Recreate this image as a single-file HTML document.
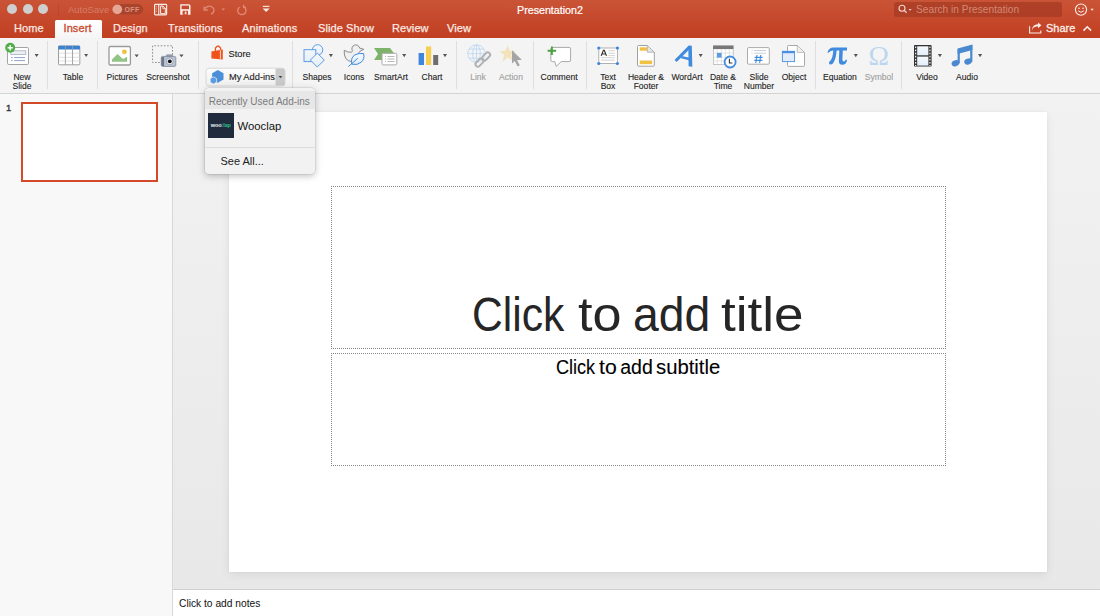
<!DOCTYPE html>
<html><head><meta charset="utf-8">
<style>
*{margin:0;padding:0;box-sizing:border-box}
html,body{width:1100px;height:616px;overflow:hidden;background:#fff;font-family:"Liberation Sans",sans-serif}
.a{position:absolute}
#top{left:0;top:0;width:1100px;height:38px;background:linear-gradient(#CA5437,#C13E21)}
.tl{width:10px;height:10px;border-radius:50%;background:#CFCFCF;top:3.5px}
.tab{top:22px;font-size:11px;color:#FBE9E4;white-space:nowrap;letter-spacing:0.1px;-webkit-text-stroke:0.25px #FBE9E4}
#instab{left:55px;top:20px;width:46.5px;height:18px;background:linear-gradient(#FFFFFF,#F6F6F6);border-radius:1.5px 1.5px 0 0}
#ribbon{left:0;top:38px;width:1100px;height:56px;background:#F4F4F4;border-bottom:1px solid #D4D4D4}
.sep{top:41px;width:1px;height:48px;background:#E0E0E0}
.lbl{font-size:9.3px;color:#1E1E1E;white-space:nowrap;line-height:9.2px;text-align:center;transform:scaleX(0.92);-webkit-text-stroke:0.12px #1E1E1E}
.lbl.dis{-webkit-text-stroke:0.12px #A0A0A0}
.dis{color:#A0A0A0}
.arr{width:0;height:0;border-left:3px solid transparent;border-right:3px solid transparent;border-top:4px solid #555}
#left{left:0;top:94px;width:173px;height:522px;background:#F8F8F8;border-right:1px solid #D8D8D8}
#main{left:173px;top:94px;width:927px;height:495px;background:linear-gradient(#F2F2F2,#EDEDED 50%,#E8E8E8)}
#notes{left:173px;top:589px;width:927px;height:27px;background:#FFF;border-top:1px solid #D0D0D0}
#slide{left:229px;top:112px;width:818px;height:460px;background:#FFF;box-shadow:0 0 2px rgba(0,0,0,0.06),0 3px 10px rgba(0,0,0,0.07)}
.ttl{top:287px;font-size:48px;color:#262626;white-space:nowrap;transform-origin:0 0}
.sttl{top:355.5px;font-size:19.5px;color:#000;white-space:nowrap;transform-origin:0 0;-webkit-text-stroke:0.1px #000}
.ph{border:1px dotted #858585}
</style></head><body>
<div id="top" class="a"></div>
<div class="a tl" style="left:7px"></div>
<div class="a tl" style="left:22.5px"></div>
<div class="a tl" style="left:38px"></div>
<div class="a" style="left:58px;top:3px;width:1px;height:13px;background:rgba(0,0,0,0.08)"></div>
<div class="a" style="left:68px;top:4px;font-size:9.5px;color:rgba(255,255,255,0.28)">AutoSave</div>
<div class="a" style="left:517px;top:4px;font-size:10.7px;color:#FFF;-webkit-text-stroke:0.2px #FFF">Presentation2</div>


<svg class="a" style="left:0;top:0" width="1100" height="38" viewBox="0 0 1100 38">
<rect x="112.3" y="4.1" width="31" height="10.5" rx="5.25" fill="#A9442C"/>
<circle cx="117.3" cy="9.35" r="4.9" fill="#E7A594"/>
<text x="124.5" y="12.2" font-family="Liberation Sans" font-weight="bold" font-size="7" fill="#DC927F" letter-spacing="0.4">OFF</text>
<!-- sidebar icon -->
<rect x="154.6" y="4.3" width="12" height="10.6" rx="0.8" fill="none" stroke="#FBEDE8" stroke-width="1.2"/>
<rect x="158.2" y="4.3" width="1.1" height="10.6" fill="#FBEDE8"/>
<path d="M156.3 6.3V7.1M156.3 8.6V9.4M156.3 10.9V11.7" stroke="#FBEDE8" stroke-width="0.9"/>
<path d="M160.6 6V13.6H165.3V8.6L162.9 6Z" fill="none" stroke="#FBEDE8" stroke-width="1"/>
<path d="M162.9 6V8.6H165.3" fill="none" stroke="#FBEDE8" stroke-width="0.8"/>
<!-- save icon -->
<path d="M180.2 4.2H189.2L190.5 5.5V14.8H180.2Z" fill="#FBEDE8"/>
<rect x="181.6" y="5.6" width="7.4" height="3.6" fill="#C84A2E"/>
<rect x="182.6" y="10.8" width="5.4" height="4" fill="#C84A2E"/>
<rect x="184.8" y="11.6" width="1.6" height="2.4" fill="#FBEDE8"/>
<!-- undo -->
<g fill="none" stroke="#E49A88" stroke-width="1.3" opacity="0.8">
<path d="M205 8.5Q207.5 5.8 210.5 6.3Q214 7.2 214 10.2Q214 13.2 211 14"/>
<path d="M204.2 6.4V10H207.8"/>
<path d="M239.5 7.1Q237.2 9 237.8 11.6Q238.7 14.6 241.8 14.6Q245.5 14.4 246 10.8Q246 7.6 243.2 6.6"/>
<path d="M243.6 4.8V7.4H246"/>
</g>
<path d="M221.5 8.6H225L223.25 10.6Z" fill="#E49A88" opacity="0.8"/>
<!-- customize -->
<rect x="262.8" y="5.8" width="6.6" height="1.1" fill="#FBEDE8"/>
<path d="M262.6 8.4H269.6L266.1 12.1Z" fill="#FBEDE8"/>
<!-- search box -->
<rect x="894" y="2" width="168" height="15" rx="2.5" fill="#A53A22" opacity="0.72"/>
<circle cx="902" cy="8.2" r="3" fill="none" stroke="#F5D8D0" stroke-width="1.1"/>
<path d="M904.2 10.4L906.6 12.8" stroke="#F5D8D0" stroke-width="1.3"/>
<path d="M908.6 9H911.6L910.1 10.8Z" fill="#F5D8D0"/>
<!-- smiley -->
<circle cx="1081" cy="9.6" r="5.6" fill="none" stroke="#FBEDE8" stroke-width="1.1"/>
<circle cx="1079" cy="8.2" r="0.8" fill="#FBEDE8"/><circle cx="1083" cy="8.2" r="0.8" fill="#FBEDE8"/>
<path d="M1078.2 10.8Q1081 13.8 1083.8 10.8" fill="none" stroke="#FBEDE8" stroke-width="1"/>
<path d="M1090.4 8.8H1093.8L1092.1 10.8Z" fill="#FBEDE8"/>
<!-- share -->
<path d="M1029.6 26.2V33H1040.8V30.6" fill="none" stroke="#FBEDE8" stroke-width="1.1"/>
<path d="M1031.8 31.2Q1032.5 26.4 1038 26.2V28.2L1041.4 25.2L1038 22.4V24.2Q1032 24.4 1031.8 31.2Z" fill="#FBEDE8"/>
<path d="M1083.5 30.6L1087.3 26.8L1091.1 30.6" fill="none" stroke="#FBEDE8" stroke-width="1.6"/>
</svg>
<div class="a" style="left:916px;top:4px;font-size:10.2px;color:rgba(255,225,215,0.45);white-space:nowrap">Search in Presentation</div>
<div class="a" style="left:1046px;top:22px;font-size:11px;color:#FBEDE8;white-space:nowrap;-webkit-text-stroke:0.3px #FBEDE8">Share</div>
<div id="instab" class="a"></div>
<div class="a tab" style="left:14px">Home</div>
<div class="a tab" style="left:63.5px;color:#C9472A;-webkit-text-stroke:0.3px #C9472A">Insert</div>
<div class="a tab" style="left:113px">Design</div>
<div class="a tab" style="left:168px">Transitions</div>
<div class="a tab" style="left:242px">Animations</div>
<div class="a tab" style="left:318px">Slide Show</div>
<div class="a tab" style="left:392px">Review</div>
<div class="a tab" style="left:447px">View</div>

<div id="ribbon" class="a"></div>

<svg class="a" style="left:0;top:0" width="1100" height="94" viewBox="0 0 1100 94">
<defs>
<linearGradient id="lb" x1="0" y1="0" x2="0" y2="1"><stop offset="0" stop-color="#F6F9FD"/><stop offset="1" stop-color="#E3EDF9"/></linearGradient>
<linearGradient id="btn" x1="0" y1="0" x2="0" y2="1"><stop offset="0" stop-color="#FDFDFD"/><stop offset="1" stop-color="#EFEFEF"/></linearGradient>
</defs>
<!-- New Slide -->
<rect x="7.5" y="47.5" width="21" height="17" rx="1.2" fill="#fff" stroke="#A3A3A3" stroke-width="1"/>
<rect x="10.8" y="50.8" width="15" height="3.6" fill="#F0F0F0" stroke="#A9B6C9" stroke-width="0.9"/>
<rect x="11" y="57" width="1.6" height="1.1" fill="#9AAACC"/><rect x="14.2" y="57" width="10.8" height="1.1" fill="#9AAACC"/>
<rect x="11" y="60" width="1.6" height="1.1" fill="#9AAACC"/><rect x="14.2" y="60" width="10.8" height="1.1" fill="#9AAACC"/>
<circle cx="10.2" cy="47.8" r="5" fill="#52AE4A"/>
<rect x="7.6" y="47.05" width="5.2" height="1.5" fill="#fff"/><rect x="9.45" y="45.2" width="1.5" height="5.2" fill="#fff"/>
<!-- Table -->
<rect x="58.5" y="46" width="21.3" height="18.8" rx="1" fill="#fff" stroke="#9C9C9C" stroke-width="1"/>
<rect x="58.3" y="45.8" width="21.7" height="3.8" rx="0.8" fill="#3D82D0"/>
<path d="M58.8 53.2H79.6M58.8 57.3H79.6M58.8 61H79.6" stroke="#DCDCDC" stroke-width="0.9"/>
<path d="M65.4 46V64.8M72.5 46V64.8" stroke="#9C9C9C" stroke-width="0.9"/>
<!-- Pictures -->
<rect x="109" y="46.5" width="21.4" height="18.5" rx="1.3" fill="#fff" stroke="#9A9A9A" stroke-width="1.3"/>
<path d="M111.9 61.8L111.9 59.5L117.5 54L123 58.9L127.1 56.7L127.1 61.8Z" fill="#92C488"/>
<circle cx="124.4" cy="51.8" r="2.4" fill="#F0C23A"/>
<!-- Screenshot -->
<path d="M163 62.5H152.6V45.8H172.5V56" fill="none" stroke="#8A8A8A" stroke-width="1" stroke-dasharray="1.6 1.6"/>
<rect x="166.3" y="54.8" width="6.2" height="2.5" rx="0.8" fill="#98A1B1" stroke="#7E8696" stroke-width="0.6"/>
<rect x="161.3" y="56.4" width="14.5" height="10" rx="1.3" fill="#BAC3D3" stroke="#7E8696" stroke-width="0.8"/>
<rect x="161.5" y="57" width="2.6" height="9" fill="#6E7788"/>
<circle cx="169.8" cy="61.3" r="3.4" fill="#E8ECF2" stroke="#7E8696" stroke-width="0.6"/>
<circle cx="169.8" cy="61.3" r="1.9" fill="#111"/>
<!-- Store -->
<path d="M215.4 51V48.2Q218 43.8 220.6 48.2V50.5" fill="none" stroke="#F0531A" stroke-width="1.3"/>
<path d="M211.4 51.4L222.8 49.4V59.6L211.4 58.4Z" fill="#F0531A"/>
<path d="M220.4 50.3V58.9" stroke="#fff" stroke-width="0.8"/>
<!-- My Add-ins button -->
<rect x="206" y="68.2" width="79" height="17.8" rx="3" fill="url(#btn)" stroke="#D0D0D0" stroke-width="0.8"/>
<path d="M275.5 68.6H282.3Q284.9 68.6 284.9 71.2V83Q284.9 85.6 282.3 85.6H275.5Z" fill="#C9C9C9"/>
<path d="M278.6 76H282.3L280.45 78.2Z" fill="#444"/>
<path d="M217.8 70L223.5 73.2V79.6L217.8 82.8L212.1 79.6V73.2Z" fill="#4A8FD8"/>
<path d="M213.4 76.8L216.6 78.6V82.2L213.4 84L210.2 82.2V78.6Z" fill="#5C9CE0" stroke="#F4F4F4" stroke-width="0.7"/>
<!-- Shapes -->
<circle cx="317.6" cy="49.9" r="5.2" fill="url(#lb)" stroke="#5B9BE0" stroke-width="1"/>
<rect x="304" y="49.7" width="11.8" height="11.9" fill="url(#lb)" stroke="#5B9BE0" stroke-width="1"/>
<path d="M317.3 53.2L324.3 60.1L317.3 67L310.4 60.1Z" fill="url(#lb)" stroke="#5B9BE0" stroke-width="1"/>
<!-- Icons -->
<path d="M344.2 50.3Q347.5 52.6 351.6 52.2Q352.6 51.7 352.3 50.6A3.9 3.9 0 1 1 359.6 48.1L363.8 49.3L359.9 51.3Q358.8 53 357.2 54.8L352 61.6Q343.6 61.2 344.2 50.3Z" fill="#F0F0F0" stroke="#7E7E7E" stroke-width="0.9" stroke-linejoin="round"/>
<path d="M351.8 64.2Q350.5 57.5 355 54.8Q359 52.8 363.6 53.6Q365 59 361.2 62.2Q357.5 65.5 351.8 64.2Z" fill="url(#lb)" stroke="#3D8AE0" stroke-width="1"/>
<path d="M348.4 66.6L357.8 58.2" stroke="#3D8AE0" stroke-width="1"/>
<!-- SmartArt -->
<path d="M374 48H390L394.5 54L390 60H374L378 54Z" fill="#7DB36A"/>
<rect x="382" y="53.3" width="14.8" height="11.6" rx="1.2" fill="#fff" stroke="#A8A8A8" stroke-width="1"/>
<path d="M385 56.5H386M387.5 56.5H394.5M385 59H386M387.5 59H394.5M385 61.5H386M387.5 61.5H394.5" stroke="#9A9A9A" stroke-width="0.7"/>
<!-- Chart -->
<rect x="418.6" y="53" width="5.4" height="12" fill="#3E86DB"/>
<rect x="426" y="46.5" width="5.2" height="18.5" fill="#F6CF52"/>
<rect x="433.2" y="55" width="5" height="10" fill="#6E6E6E"/>
<!-- Link -->
<g fill="none" stroke="#B9D5F2" stroke-width="0.8">
<circle cx="476.5" cy="53.6" r="8.8"/>
<ellipse cx="476.5" cy="53.6" rx="3.8" ry="8.8"/>
<path d="M467.7 53.6H485.3M469 49H484M469 58.2H484M476.5 44.8V62.4"/>
</g>
<g fill="none" stroke="#B0B0B0" stroke-width="1.9">
<rect x="474.8" y="60.2" width="9.4" height="4.8" rx="2.4" transform="rotate(-45 479.5 62.6)"/>
<rect x="481.4" y="54" width="9.4" height="4.8" rx="2.4" transform="rotate(-45 486.1 56.4)"/>
</g>
<!-- Action -->
<path d="M507.6 45.2L509.7 50.8L515.6 51.1L511 54.9L512.6 60.6L507.6 57.4L502.3 61.8L504.2 55L499.2 51.3L505.4 50.8Z" fill="#F3E3BC"/>
<path d="M512 50.2V63.4L514.7 61.1L517.6 66.4L519.8 65.3L517 60.2L521.8 59.8Z" fill="#A5A5A5"/>
<!-- Comment -->
<path d="M552.4 47.4H569Q570.6 47.4 570.6 49V60Q570.6 61.6 569 61.6H561.2L556.3 66.4L554.7 61.6H552.4Q550.8 61.6 550.8 60V49Q550.8 47.4 552.4 47.4Z" fill="#fff" stroke="#A8A8A8" stroke-width="1"/>
<path d="M547.6 50.7H556.2M551.9 46.4V55" stroke="#4AA33F" stroke-width="1.9"/>
<!-- Text Box -->
<rect x="598.8" y="48" width="18.6" height="15.5" fill="#fff" stroke="#A8A8A8" stroke-width="0.9"/>
<path d="M608.4 50.7H614.9M608.4 53.2H614.9M608.4 55.6H614.9M601 57.7H614.9M601 60.2H614.9" stroke="#C8C8C8" stroke-width="0.8"/>
<path d="M601.2 55.9L603.4 50.3H604.3L606.5 55.9M602.1 54H605.6" fill="none" stroke="#333" stroke-width="1.2"/>
<g fill="#3C86DE"><circle cx="598.8" cy="48" r="1.6"/><circle cx="617.4" cy="48" r="1.6"/><circle cx="598.8" cy="63.5" r="1.6"/><circle cx="617.4" cy="63.5" r="1.6"/></g>
<!-- Header & Footer -->
<path d="M638.5 45.5H647.3L654.3 52.2V65.2Q654.3 66.2 653.3 66.2H638.5Q637.5 66.2 637.5 65.2V46.5Q637.5 45.5 638.5 45.5Z" fill="#fff" stroke="#A0A0A0" stroke-width="1"/>
<path d="M647.3 45.8V52.2H654" fill="#E6E6E6" stroke="#A8A8A8" stroke-width="0.8"/>
<rect x="639.7" y="47.3" width="7.4" height="3.4" fill="#EFC145"/>
<rect x="639.7" y="60.5" width="12.4" height="3.7" fill="#EFC145"/>
<!-- WordArt -->
<path d="M675.6 61L689.6 46.8" fill="none" stroke="#3E8BDF" stroke-width="3.1"/>
<path d="M688.3 45.8Q690 45.2 691.8 45.8L692.3 66.8L688.6 66.2Z" fill="#3E8BDF"/>
<path d="M681.3 57.1L689.3 59" stroke="#3E8BDF" stroke-width="2.5"/>
<!-- Date & Time -->
<rect x="713.4" y="45.8" width="19.8" height="18.6" fill="#fff" stroke="#B8B8B8" stroke-width="0.8"/>
<rect x="713.1" y="45.6" width="20.3" height="3.5" fill="#777"/>
<path d="M717.2 49V64.4M721.4 49V64.4M725.3 49V64.4M729.3 49V64.4M713.4 53H733.2M713.4 57.2H733.2M713.4 61H733.2" stroke="#DADADA" stroke-width="0.7"/>
<rect x="716.9" y="52.9" width="4.7" height="4.7" fill="#5B9BE0"/>
<circle cx="730.1" cy="62" r="5.5" fill="#fff" stroke="#3E8BDF" stroke-width="1.8"/>
<path d="M729.4 58.8V63H732.4" fill="none" stroke="#333" stroke-width="1.1"/>
<!-- Slide Number -->
<rect x="747.5" y="47.6" width="21.8" height="16.6" rx="1.2" fill="#fff" stroke="#AAAAAA" stroke-width="1"/>
<path d="M751.6 50.5H752.6M754.2 50.5H766M751.6 53.2H752.6M754.2 53.2H766" stroke="#B8C2CE" stroke-width="0.8"/>
<path d="M757 55L755.8 62.8M760.8 55L759.6 62.8M754.6 57.4H762.6M754.3 60.4H762.3" stroke="#3E8BDF" stroke-width="1.1"/>
<!-- Object -->
<path d="M788.3 45.5H797.2L804.5 52.4V65.6Q804.5 66.4 803.7 66.4H788.3Q787.5 66.4 787.5 65.6V46.3Q787.5 45.5 788.3 45.5Z" fill="#fff" stroke="#A8A8A8" stroke-width="1"/>
<path d="M797.2 45.8V52.4H804.2" fill="#F0F0F0" stroke="#B0B0B0" stroke-width="0.8"/>
<rect x="782.4" y="51.3" width="12.2" height="10.3" fill="#E3EDF9" stroke="#4A90E0" stroke-width="0.9"/>
<rect x="782.1" y="51" width="12.8" height="2.2" fill="#4A90E0"/>
<!-- Equation -->
<path d="M827.4 52.4Q829 47.6 833.5 47.6H847V50.6H842.8L842.4 59.4Q842.4 61.5 843.8 61.5Q845.1 61.5 845.9 59.5L847.1 59.9Q846.2 64.8 842.2 64.8Q838.7 64.8 838.9 60.4L839.3 50.6H836.6Q836.1 57.6 834.1 61.6Q832.8 64.6 830.8 64.6Q829 64.6 829 63Q829 61.8 830.4 60.8Q832.7 58.4 833.3 50.6Q830.4 50.6 828.5 52.8Z" fill="#3E8BDF"/>
<!-- Symbol -->
<text x="878.8" y="65" text-anchor="middle" font-family="Liberation Serif" font-size="27.5" fill="#BCD6F0">&#937;</text>
<!-- Video -->
<rect x="914" y="45.1" width="17.6" height="21.5" rx="0.8" fill="#333"/>
<rect x="917.2" y="46.3" width="11.2" height="9" fill="url(#lb)"/>
<rect x="917.2" y="56.6" width="11.2" height="9" fill="url(#lb)"/>
<g fill="#E8E8E8">
<rect x="915" y="46.5" width="1.3" height="1.6"/><rect x="915" y="49.6" width="1.3" height="1.6"/><rect x="915" y="52.7" width="1.3" height="1.6"/><rect x="915" y="55.8" width="1.3" height="1.6"/><rect x="915" y="58.9" width="1.3" height="1.6"/><rect x="915" y="62" width="1.3" height="1.6"/><rect x="915" y="65" width="1.3" height="1"/>
<rect x="929.3" y="46.5" width="1.3" height="1.6"/><rect x="929.3" y="49.6" width="1.3" height="1.6"/><rect x="929.3" y="52.7" width="1.3" height="1.6"/><rect x="929.3" y="55.8" width="1.3" height="1.6"/><rect x="929.3" y="58.9" width="1.3" height="1.6"/><rect x="929.3" y="62" width="1.3" height="1.6"/><rect x="929.3" y="65" width="1.3" height="1"/>
</g>
<!-- Audio -->
<path d="M957.6 48.6L972.4 44.6V50L957.6 54Z" fill="#4A88D0"/>
<rect x="957.6" y="49" width="2.2" height="14.4" fill="#4A88D0"/>
<rect x="970.2" y="45" width="2.2" height="16.6" fill="#4A88D0"/>
<ellipse cx="955.4" cy="63.2" rx="3.9" ry="3" transform="rotate(-22 955.4 63.2)" fill="#4A88D0"/>
<ellipse cx="968.1" cy="61.5" rx="3.9" ry="3" transform="rotate(-22 968.1 61.5)" fill="#4A88D0"/>
<!-- dropdown arrows -->
<g fill="#555">
<path d="M34.6 54H38.7L36.65 57.1Z"/>
<path d="M84.2 54.1H88.1L86.15 56.9Z"/>
<path d="M134.5 54.4H138.8L136.65 57.3Z"/>
<path d="M179.3 54.4H183.6L181.45 57.3Z"/>
<path d="M328.90 54.1H332.90L330.90 57.2Z"/>
<path d="M402.20 54.1H406.20L404.20 57.2Z"/>
<path d="M443.00 54.1H447.00L445.00 57.2Z"/>
<path d="M698.70 54.1H702.70L700.70 57.2Z"/>
<path d="M853.80 54.1H857.80L855.80 57.2Z"/>
<path d="M937.90 54.1H941.90L939.90 57.2Z"/>
<path d="M978.10 54.1H982.10L980.10 57.2Z"/>
</g>
<!-- separators -->
<g fill="#DEDEDE">
<rect x="47" y="41" width="1" height="48"/><rect x="97" y="41" width="1" height="48"/><rect x="198" y="41" width="1" height="48"/>
<rect x="292" y="41" width="1" height="48"/><rect x="456" y="41" width="1" height="48"/><rect x="533" y="41" width="1" height="48"/>
<rect x="586" y="41" width="1" height="48"/><rect x="815" y="41" width="1" height="48"/><rect x="901" y="41" width="1" height="48"/>
</g>
</svg>

<div class="a lbl" style="left:-18.5px;top:73px;width:80px">New<br>Slide</div>
<div class="a lbl" style="left:32.8px;top:73px;width:80px">Table</div>
<div class="a lbl" style="left:82.3px;top:73px;width:80px">Pictures</div>
<div class="a lbl" style="left:128px;top:73px;width:80px">Screenshot</div>
<div class="a lbl" style="left:228.5px;top:49.5px;text-align:left;transform:none">Store</div>
<div class="a lbl" style="left:228.9px;top:73px;text-align:left;transform:none">My Add-ins</div>
<div class="a lbl" style="left:276.8px;top:73px;width:80px">Shapes</div>
<div class="a lbl" style="left:314px;top:73px;width:80px">Icons</div>
<div class="a lbl" style="left:350.8px;top:73px;width:80px">SmartArt</div>
<div class="a lbl" style="left:391.5px;top:73px;width:80px">Chart</div>
<div class="a lbl dis" style="left:437.5px;top:73px;width:80px">Link</div>
<div class="a lbl dis" style="left:470.6px;top:73px;width:80px">Action</div>
<div class="a lbl" style="left:519.3px;top:73px;width:80px">Comment</div>
<div class="a lbl" style="left:568px;top:73px;width:80px">Text<br>Box</div>
<div class="a lbl" style="left:605.7px;top:73px;width:80px">Header &amp;<br>Footer</div>
<div class="a lbl" style="left:646.8px;top:73px;width:80px">WordArt</div>
<div class="a lbl" style="left:683.1px;top:73px;width:80px">Date &amp;<br>Time</div>
<div class="a lbl" style="left:718.5px;top:73px;width:80px">Slide<br>Number</div>
<div class="a lbl" style="left:753.7px;top:73px;width:80px">Object</div>
<div class="a lbl" style="left:800.3px;top:73px;width:80px">Equation</div>
<div class="a lbl dis" style="left:838.7px;top:73px;width:80px">Symbol</div>
<div class="a lbl" style="left:886.5px;top:73px;width:80px">Video</div>
<div class="a lbl" style="left:926.5px;top:73px;width:80px">Audio</div>

<div id="left" class="a"></div>
<div id="main" class="a"></div>
<div id="notes" class="a"></div>
<div id="slide" class="a"></div>
<div class="a ph" style="left:331px;top:186px;width:615px;height:163px"></div>
<div class="a ph" style="left:331px;top:353px;width:615px;height:113px"></div>
<div class="a ttl" style="left:471.8px;transform:scaleX(0.888)">Click</div>
<div class="a ttl" style="left:577.9px;transform:scaleX(1.087)">to</div>
<div class="a ttl" style="left:633px;transform:scaleX(0.965)">add</div>
<div class="a ttl" style="left:721.4px;transform:scaleX(1.105)">title</div>
<div class="a sttl" style="left:556px;transform:scaleX(0.927)">Click</div>
<div class="a sttl" style="left:599.1px;transform:scaleX(1.087)">to</div>
<div class="a sttl" style="left:620.2px">add</div>
<div class="a sttl" style="left:656.2px;transform:scaleX(1.04)">subtitle</div>
<div class="a" style="left:178.5px;top:597px;font-size:11px;color:#111;white-space:nowrap;transform:scaleX(0.93);transform-origin:0 0">Click to add notes</div>
<div class="a" style="left:6px;top:102.3px;font-size:9.5px;color:#333;-webkit-text-stroke:0.35px #333">1</div>
<div class="a" style="left:20.5px;top:101.5px;width:137px;height:80.5px;border:2px solid #D24A2A;background:#fff"></div>

<div class="a" style="left:205px;top:87.5px;width:110px;height:86.5px;background:#F2F2F2;border-radius:4px;box-shadow:0 2px 7px rgba(0,0,0,0.25),0 0 0 0.5px rgba(0,0,0,0.12)"></div>
<div class="a" style="left:205px;top:90.5px;width:110px;height:18.3px;background:#E7E7E7"></div>
<div class="a" style="left:208.7px;top:95.8px;font-size:10px;color:#7B7B7B;white-space:nowrap">Recently Used Add-ins</div>
<div class="a" style="left:208.3px;top:113.3px;width:25.7px;height:24.7px;background:#202C3D"></div>
<div class="a" style="left:210.8px;top:122px;font-size:5.6px;font-weight:bold;color:#E8EEF2;white-space:nowrap;letter-spacing:-0.15px">woo<span style="color:#2DB88A">:lap</span></div>
<div class="a" style="left:237.5px;top:120px;font-size:11.3px;color:#111;white-space:nowrap">Wooclap</div>
<div class="a" style="left:205px;top:147px;width:110px;height:1px;background:#DCDCDC"></div>
<div class="a" style="left:220.5px;top:155px;font-size:11px;color:#222;white-space:nowrap">See All...</div>
</body></html>
